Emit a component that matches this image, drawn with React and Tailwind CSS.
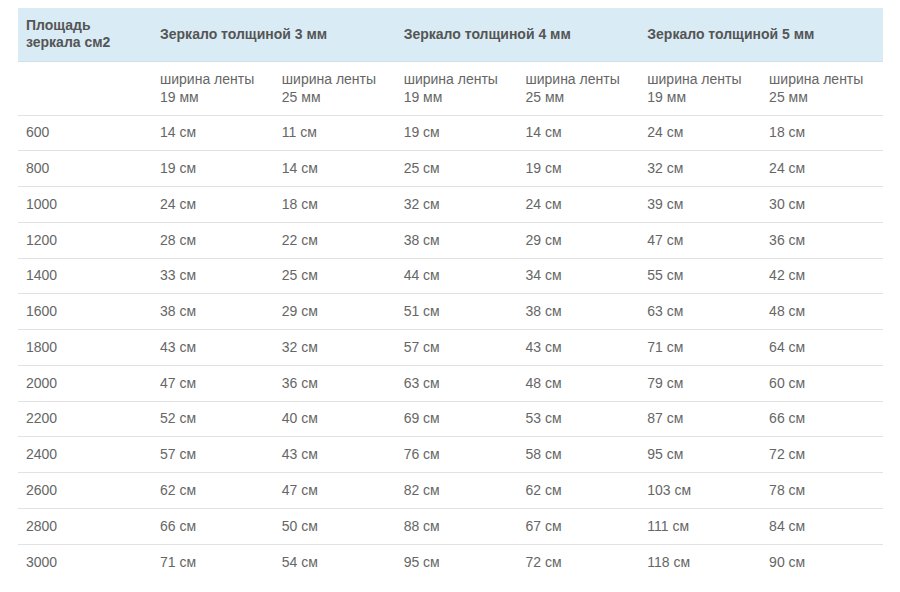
import React from 'react';

const rows = [
  ['600', '14 см', '11 см', '19 см', '14 см', '24 см', '18 см'],
  ['800', '19 см', '14 см', '25 см', '19 см', '32 см', '24 см'],
  ['1000', '24 см', '18 см', '32 см', '24 см', '39 см', '30 см'],
  ['1200', '28 см', '22 см', '38 см', '29 см', '47 см', '36 см'],
  ['1400', '33 см', '25 см', '44 см', '34 см', '55 см', '42 см'],
  ['1600', '38 см', '29 см', '51 см', '38 см', '63 см', '48 см'],
  ['1800', '43 см', '32 см', '57 см', '43 см', '71 см', '64 см'],
  ['2000', '47 см', '36 см', '63 см', '48 см', '79 см', '60 см'],
  ['2200', '52 см', '40 см', '69 см', '53 см', '87 см', '66 см'],
  ['2400', '57 см', '43 см', '76 см', '58 см', '95 см', '72 см'],
  ['2600', '62 см', '47 см', '82 см', '62 см', '103 см', '78 см'],
  ['2800', '66 см', '50 см', '88 см', '67 см', '111 см', '84 см'],
  ['3000', '71 см', '54 см', '95 см', '72 см', '118 см', '90 см'],
];

const widths = ['19', '25', '19', '25', '19', '25'];

export default function App() {
  return (
    <div className="w-[900px] h-[592px] bg-white pt-2 pl-[18px] font-['Liberation_Sans',Arial,sans-serif] text-[14px] text-[#666]">
      <table className="w-[865px] border-collapse table-fixed">
        <colgroup>
          <col className="w-[134px]" />
          {widths.map((_, i) => (
            <col key={i} className="w-[121.8px]" />
          ))}
        </colgroup>
        <thead>
          <tr className="bg-[#d9ecf6] h-[53px] border-b border-[#cfe2ec]">
            <th className="text-left align-middle font-bold text-[#555] pl-2 leading-[17px]">
              Площадь<br />зеркала см2
            </th>
            <th colSpan={2} className="text-left align-middle font-bold text-[#555] pl-2">Зеркало толщиной 3 мм</th>
            <th colSpan={2} className="text-left align-middle font-bold text-[#555] pl-2">Зеркало толщиной 4 мм</th>
            <th colSpan={2} className="text-left align-middle font-bold text-[#555] pl-2">Зеркало толщиной 5 мм</th>
          </tr>
        </thead>
        <tbody>
          <tr className="h-[54px] border-b border-[#e2e2e2]">
            <td></td>
            {widths.map((w, i) => (
              <td key={i} className="pl-2 align-middle leading-[18px]">
                ширина ленты<br />{w} мм
              </td>
            ))}
          </tr>
          {rows.map((r, i) => (
            <tr key={r[0]} className={`h-[35.75px] ${i < rows.length - 1 ? 'border-b border-[#e2e2e2]' : ''}`}>
              {r.map((c, j) => (
                <td key={j} className="pl-2 align-middle">{c}</td>
              ))}
            </tr>
          ))}
        </tbody>
      </table>
    </div>
  );
}
